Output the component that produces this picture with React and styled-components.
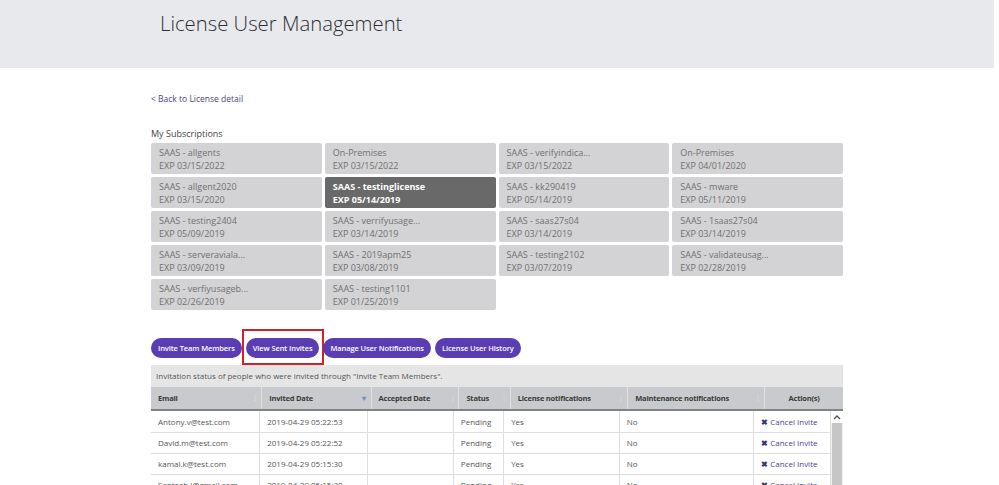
import React from "react";
import styled, { createGlobalStyle, css } from "styled-components";

const GlobalStyle = createGlobalStyle`
  html, body {
    margin: 0;
    padding: 0;
    overflow: hidden;
    background: #fff;
    font-family: "Open Sans", "Liberation Sans", sans-serif;
  }
`;

const subscriptions = [
  { name: "SAAS - allgents", exp: "03/15/2022" },
  { name: "On-Premises", exp: "03/15/2022" },
  { name: "SAAS - verifyindica...", exp: "03/15/2022" },
  { name: "On-Premises", exp: "04/01/2020" },
  { name: "SAAS - allgent2020", exp: "03/15/2020" },
  { name: "SAAS - testinglicense", exp: "05/14/2019", active: true },
  { name: "SAAS - kk290419", exp: "05/14/2019" },
  { name: "SAAS - mware", exp: "05/11/2019" },
  { name: "SAAS - testing2404", exp: "05/09/2019" },
  { name: "SAAS - verrifyusage...", exp: "03/14/2019" },
  { name: "SAAS - saas27s04", exp: "03/14/2019" },
  { name: "SAAS - 1saas27s04", exp: "03/14/2019" },
  { name: "SAAS - serveraviala...", exp: "03/09/2019" },
  { name: "SAAS - 2019apm25", exp: "03/08/2019" },
  { name: "SAAS - testing2102", exp: "03/07/2019" },
  { name: "SAAS - validateusag...", exp: "02/28/2019" },
  { name: "SAAS - verfiyusageb...", exp: "02/26/2019" },
  { name: "SAAS - testing1101", exp: "01/25/2019" },
];

const invites = [
  { email: "Antony.v@test.com", date: "2019-04-29 05:22:53" },
  { email: "David.m@test.com", date: "2019-04-29 05:22:52" },
  { email: "kamal.k@test.com", date: "2019-04-29 05:15:30" },
  { email: "Santosh.j@gmail.com", date: "2019-04-29 05:15:30" },
];

const columns = [
  { label: "Email", width: "16%" },
  { label: "Invited Date", width: "15.8%", sorted: true },
  { label: "Accepted Date", width: "12.7%" },
  { label: "Status", width: "7.4%" },
  { label: "License notifications", width: "17%" },
  { label: "Maintenance notifications", width: "19.8%" },
  { label: "Action(s)", width: "11.3%", center: true },
];

const Page = styled.div`
  padding-right: 5px;
`;

const Banner = styled.header`
  background: #e8e9ed;
  height: 68px;
`;

const Container = styled.div`
  width: 692px;
  margin: 0 auto;
`;

const Title = styled.h1`
  margin: 0;
  padding: 9px 0 0 9px;
  font-family: "Open Sans", sans-serif;
  font-weight: 300;
  font-size: 20.3px;
  line-height: 28px;
  color: #2f2f33;
`;

const BackLink = styled.a`
  display: block;
  margin-top: 24px;
  font-size: 8.5px;
  line-height: 14px;
  color: #4b3f8c;
  text-decoration: none;
`;

const SectionLabel = styled.div`
  margin-top: 22px;
  font-size: 9px;
  line-height: 12px;
  color: #444;
`;

const TileGrid = styled.div`
  margin-top: 3px;
  display: grid;
  grid-template-columns: repeat(4, 1fr);
  gap: 3px;
`;

const Tile = styled.div`
  height: 31px;
  box-sizing: border-box;
  padding: 4px 8px 0;
  border-radius: 2px;
  background: #d3d3d5;
  color: #707070;
  font-size: 9px;
  line-height: 12.5px;
  white-space: nowrap;
  ${(p) =>
    p.$active &&
    css`
      background: #696969;
      color: #fff;
      font-weight: 700;
    `}
`;

const ButtonRow = styled.div`
  margin-top: 28px;
  display: flex;
  gap: 4px;
`;

const PillButton = styled.button`
  position: relative;
  height: 20px;
  padding: 0 7px;
  border: none;
  border-radius: 10px;
  background: #5a3db3;
  color: #fff;
  font-family: "Open Sans", sans-serif;
  font-weight: 600;
  font-size: 7.5px;
  letter-spacing: -0.1px;
  cursor: pointer;

  ${(p) =>
    p.$highlight &&
    css`
      &::after {
        content: "";
        position: absolute;
        top: -9px;
        left: -4px;
        right: -5px;
        bottom: -7px;
        border: 2px solid #cf2128;
        pointer-events: none;
      }
    `}
`;

const InfoBar = styled.div`
  margin-top: 7px;
  height: 22px;
  box-sizing: border-box;
  padding: 0 5px;
  background: #e5e5e6;
  color: #555;
  font-size: 8px;
  line-height: 22px;
`;

const Table = styled.table`
  width: 100%;
  border-collapse: collapse;
  table-layout: fixed;
`;

const HeadCell = styled.th`
  position: relative;
  height: 22px;
  padding: 0 7px;
  background: #c9cacd;
  border-left: 1px solid #e0e0e2;
  border-bottom: 2px solid #808285;
  color: #3a3a3a;
  font-size: 7.5px;
  font-weight: 700;
  letter-spacing: -0.2px;
  text-align: ${(p) => (p.$center ? "center" : "left")};
  &:first-child {
    border-left: none;
  }
`;

const SortMark = styled.span`
  position: absolute;
  right: 5px;
  top: 50%;
  transform: translateY(-50%);
  font-size: 8px;
  line-height: 8px;
  color: ${(p) => (p.$active ? "#6f8fc8" : "#d9dadc")};
`;

const BodyWrap = styled.div`
  display: flex;
  align-items: stretch;
`;

const BodyTable = styled(Table)`
  flex: 1;
  width: auto;
`;

const ScrollBar = styled.div`
  width: 12px;
  display: flex;
  flex-direction: column;
  background: #f1f1f1;
`;

const ScrollArrow = styled.div`
  height: 12px;
  display: flex;
  align-items: center;
  justify-content: center;
  background: #fff;
`;

const ScrollThumb = styled.div`
  flex: 1;
  margin: 0 1px;
  background: #c6c6c6;
`;

const Cell = styled.td`
  height: 21px;
  box-sizing: border-box;
  padding: 0 7px;
  border: 1px solid #dedede;
  border-top: none;
  color: #555;
  font-size: 8px;
  white-space: nowrap;
  overflow: hidden;
  &:first-child {
    border-left: none;
  }
`;

const CancelLink = styled.a`
  color: #4b3f8c;
  text-decoration: none;
  font-size: 8px;
  span {
    font-weight: 700;
    margin-right: 2px;
    color: #3d3470;
  }
`;

const Colgroup = () => (
  <colgroup>
    {columns.map((c) => (
      <col key={c.label} style={{ width: c.width }} />
    ))}
  </colgroup>
);

export default function App() {
  return (
    <Page>
      <GlobalStyle />
      <Banner>
        <Container>
          <Title>License User Management</Title>
        </Container>
      </Banner>
      <Container>
        <BackLink href="#">&lt; Back to License detail</BackLink>
        <SectionLabel>My Subscriptions</SectionLabel>
        <TileGrid>
          {subscriptions.map((s, i) => (
            <Tile key={i} $active={s.active}>
              <div>{s.name}</div>
              <div>EXP {s.exp}</div>
            </Tile>
          ))}
        </TileGrid>

        <ButtonRow>
          <PillButton>Invite Team Members</PillButton>
          <PillButton $highlight>View Sent Invites</PillButton>
          <PillButton>Manage User Notifications</PillButton>
          <PillButton>License User History</PillButton>
        </ButtonRow>

        <InfoBar>
          Invitation status of people who were invited through "Invite Team
          Members".
        </InfoBar>

        <Table>
          <Colgroup />
          <thead>
            <tr>
              {columns.map((c) => (
                <HeadCell key={c.label} $center={c.center}>
                  {c.label}
                  {!c.center && (
                    <SortMark $active={c.sorted}>{c.sorted ? "▾" : "⁝"}</SortMark>
                  )}
                </HeadCell>
              ))}
            </tr>
          </thead>
        </Table>
        <BodyWrap>
          <BodyTable>
            <Colgroup />
            <tbody>
              {invites.map((row) => (
                <tr key={row.email}>
                  <Cell>{row.email}</Cell>
                  <Cell>{row.date}</Cell>
                  <Cell />
                  <Cell>Pending</Cell>
                  <Cell>Yes</Cell>
                  <Cell>No</Cell>
                  <Cell>
                    <CancelLink href="#">
                      <span>✖</span>Cancel Invite
                    </CancelLink>
                  </Cell>
                </tr>
              ))}
            </tbody>
          </BodyTable>
          <ScrollBar>
            <ScrollArrow>
              <svg width="8" height="6" viewBox="0 0 8 6">
                <path d="M1 5 L4 2 L7 5" fill="none" stroke="#555" strokeWidth="1.4" />
              </svg>
            </ScrollArrow>
            <ScrollThumb />
          </ScrollBar>
        </BodyWrap>
      </Container>
    </Page>
  );
}
